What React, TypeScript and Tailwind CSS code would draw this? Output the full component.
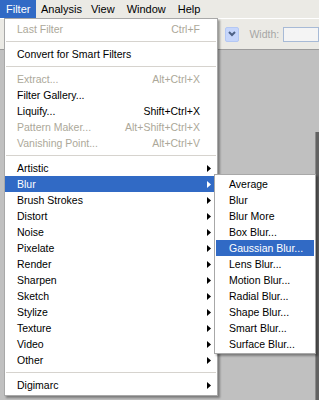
import React from "react";

type Item =
  | { kind: "sep" }
  | { kind: "item"; label: string; shortcut?: string; disabled?: boolean; sub?: boolean; active?: boolean };

const mainItems: Item[] = [
  { kind: "item", label: "Last Filter", shortcut: "Ctrl+F", disabled: true },
  { kind: "sep" },
  { kind: "item", label: "Convert for Smart Filters" },
  { kind: "sep" },
  { kind: "item", label: "Extract...", shortcut: "Alt+Ctrl+X", disabled: true },
  { kind: "item", label: "Filter Gallery..." },
  { kind: "item", label: "Liquify...", shortcut: "Shift+Ctrl+X" },
  { kind: "item", label: "Pattern Maker...", shortcut: "Alt+Shift+Ctrl+X", disabled: true },
  { kind: "item", label: "Vanishing Point...", shortcut: "Alt+Ctrl+V", disabled: true },
  { kind: "sep" },
  { kind: "item", label: "Artistic", sub: true },
  { kind: "item", label: "Blur", sub: true, active: true },
  { kind: "item", label: "Brush Strokes", sub: true },
  { kind: "item", label: "Distort", sub: true },
  { kind: "item", label: "Noise", sub: true },
  { kind: "item", label: "Pixelate", sub: true },
  { kind: "item", label: "Render", sub: true },
  { kind: "item", label: "Sharpen", sub: true },
  { kind: "item", label: "Sketch", sub: true },
  { kind: "item", label: "Stylize", sub: true },
  { kind: "item", label: "Texture", sub: true },
  { kind: "item", label: "Video", sub: true },
  { kind: "item", label: "Other", sub: true },
  { kind: "sep" },
  { kind: "item", label: "Digimarc", sub: true },
];

const subItems = [
  "Average",
  "Blur",
  "Blur More",
  "Box Blur...",
  "Gaussian Blur...",
  "Lens Blur...",
  "Motion Blur...",
  "Radial Blur...",
  "Shape Blur...",
  "Smart Blur...",
  "Surface Blur...",
];

function Arrow({ white }: { white?: boolean }) {
  return (
    <svg width="4" height="7" viewBox="0 0 4 7" className="block">
      <path d="M0 0 L4 3.5 L0 7 Z" fill={white ? "#ffffff" : "#000000"} />
    </svg>
  );
}

export default function App() {
  const font = { fontFamily: '"Liberation Sans", Arial, sans-serif' };
  return (
    <div
      className="relative w-[319px] h-[400px] overflow-hidden flex flex-col bg-[#c0c0c0] text-[11px] leading-none text-black"
      style={font}
    >
      {/* Menu bar */}
      <div className="h-[18px] flex items-stretch bg-[#ebeae5]">
        <div className="px-[6px] flex items-center bg-[#316ac5] text-white w-[36px]">Filter</div>
        <div className="px-[5px] flex items-center">Analysis</div>
        <div className="pl-[4px] pr-[6px] flex items-center">View</div>
        <div className="px-[6px] flex items-center">Window</div>
        <div className="px-[6px] flex items-center">Help</div>
      </div>

      {/* Options bar */}
      <div className="h-[32px] flex items-center pl-[225px] bg-[#ebeae5] border-t border-t-[#ffffff] border-b border-b-[#9c9c9c]">
        <div className="w-[16px] h-[15px] flex items-center justify-center rounded-[2px] border border-[#b4c8f4] bg-[#c6d6fb]">
          <svg width="8" height="6" viewBox="0 0 8 6">
            <path d="M1 1 L4 4 L7 1" stroke="#4d6185" strokeWidth="2" fill="none" />
          </svg>
        </div>
        <span className="ml-[10px] text-[10.5px] text-[#a6a6a6]">Width:</span>
        <div className="ml-[4px] w-[40px] h-[15px] border border-[#a7bad6] bg-[#f4f4f4]" />
      </div>

      {/* Canvas area */}
      <div className="flex-1 flex justify-end">
        <div className="w-[4px] mt-[82px] bg-[#626262] border-l border-l-[#8a8a8a]" />
      </div>

      {/* Main Filter menu */}
      <div className="absolute left-[4px] top-[18px] w-[214px] bg-[#ffffff] border border-[#a8a8a8] py-[2px] text-[10.5px] shadow-[2px_2px_2px_rgba(0,0,0,0.35)]">
        {mainItems.map((it, i) =>
          it.kind === "sep" ? (
            <div key={i} className="h-[9px] flex items-center px-[1px]">
              <div className="w-full h-[2px] bg-[#d6d3ce] border-b border-b-[#ffffff]" />
            </div>
          ) : (
            <div
              key={i}
              className={
                "h-[16px] flex items-center pl-[12px] pr-[6px] " +
                (it.active ? "bg-[#316ac5] text-white" : it.disabled ? "text-[#aca899]" : "text-black")
              }
            >
              <span className="flex-1 whitespace-nowrap">{it.label}</span>
              {it.shortcut && <span className="whitespace-nowrap mr-[11px]">{it.shortcut}</span>}
              {it.sub && <Arrow white={it.active} />}
            </div>
          )
        )}
      </div>

      {/* Blur submenu */}
      <div className="absolute left-[214px] top-[174px] w-[102px] bg-[#ffffff] border border-[#a8a8a8] py-[1px] px-[1px] text-[10.5px] shadow-[2px_2px_2px_rgba(0,0,0,0.35)]">
        {subItems.map((s) => (
          <div
            key={s}
            className={
              "h-[16px] flex items-center pl-[13px] whitespace-nowrap " +
              (s === "Gaussian Blur..." ? "bg-[#316ac5] text-white" : "text-black")
            }
          >
            {s}
          </div>
        ))}
      </div>
    </div>
  );
}
